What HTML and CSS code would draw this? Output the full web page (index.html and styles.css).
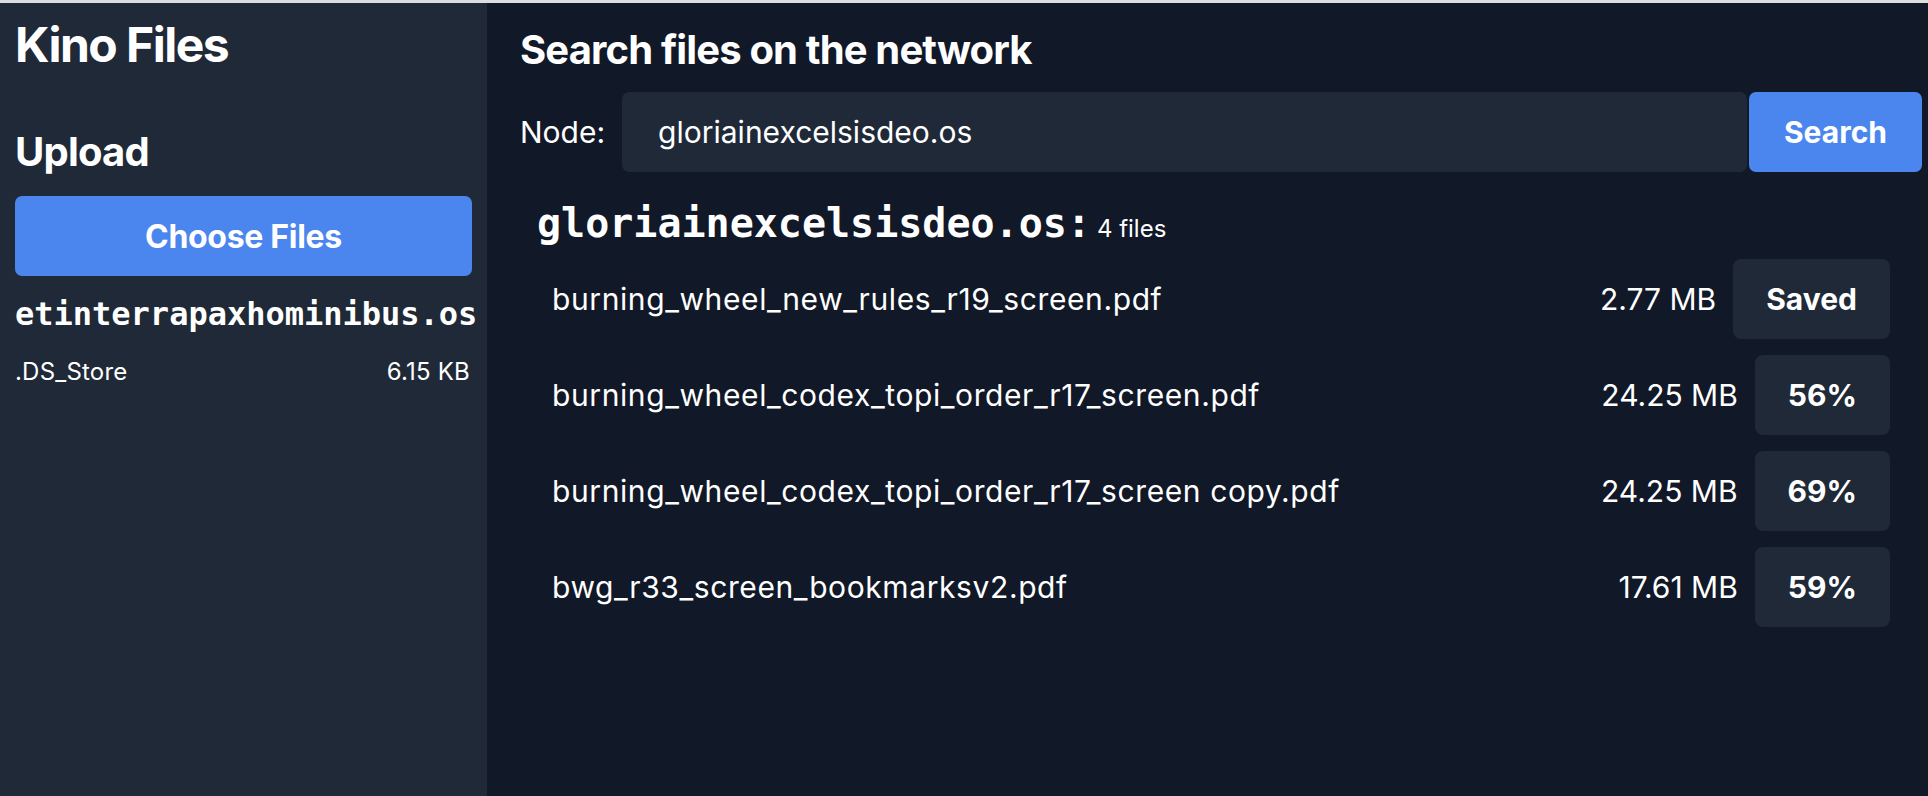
FILE: index.html
```html
<!DOCTYPE html>
<html lang="en">
<head>
<meta charset="utf-8">
<title>Kino Files</title>
<link rel="stylesheet" href="styles.css">
</head>
<body>
<div class="topstrip"></div>
<div class="app">
  <aside class="sidebar">
    <h1 class="title">Kino Files</h1>
    <h2 class="upload-title">Upload</h2>
    <button class="choose-btn">Choose Files</button>
    <div class="node-name">etinterrapaxhominibus.os</div>
    <div class="local-file">
      <span>.DS_Store</span>
      <span>6.15 KB</span>
    </div>
  </aside>
  <main class="main">
    <h2 class="search-title">Search files on the network</h2>
    <div class="search-row">
      <label class="node-label" for="node">Node:</label>
      <input id="node" class="node-input" type="text" value="gloriainexcelsisdeo.os">
      <button class="search-btn">Search</button>
    </div>
    <section class="results">
      <h3 class="results-title">gloriainexcelsisdeo.os:<span class="results-count">4 files</span></h3>
      <ul class="file-list">
        <li class="file-row">
          <span class="file-name">burning_wheel_new_rules_r19_screen.pdf</span>
          <span class="file-size">2.77 MB</span>
          <span class="file-status">Saved</span>
        </li>
        <li class="file-row">
          <span class="file-name">burning_wheel_codex_topi_order_r17_screen.pdf</span>
          <span class="file-size">24.25 MB</span>
          <span class="file-status">56%</span>
        </li>
        <li class="file-row">
          <span class="file-name">burning_wheel_codex_topi_order_r17_screen copy.pdf</span>
          <span class="file-size">24.25 MB</span>
          <span class="file-status">69%</span>
        </li>
        <li class="file-row">
          <span class="file-name">bwg_r33_screen_bookmarksv2.pdf</span>
          <span class="file-size">17.61 MB</span>
          <span class="file-status">59%</span>
        </li>
      </ul>
    </section>
  </main>
</div>
</body>
</html>
```
FILE: styles.css
```css
* { box-sizing: border-box; }
html, body { margin: 0; padding: 0; height: 100%; }
body {
  font-family: Inter, "Noto Sans", sans-serif;
  color: #ffffff;
  background: #111827;
  display: flex;
  flex-direction: column;
  overflow: hidden;
}
.topstrip { height: 3px; background: #dcdddf; flex: none; }
.app { flex: 1; display: flex; min-height: 0; }

.sidebar {
  width: 487px;
  flex: none;
  background: #1f2937;
  padding: 14px 15px 0 15px;
  display: flex;
  flex-direction: column;
}
.title {
  margin: 0;
  font-size: 48px;
  line-height: 56px;
  font-weight: 700;
  letter-spacing: -1.5px;
}
.upload-title {
  margin: 55px 0 0 0;
  font-size: 40px;
  line-height: 48px;
  font-weight: 700;
  letter-spacing: -0.8px;
}
.choose-btn {
  margin-top: 20px;
  height: 80px;
  width: 100%;
  border: none;
  border-radius: 7px;
  background: #4b86ee;
  color: #fff;
  font-family: inherit;
  font-size: 32px;
  font-weight: 700;
  letter-spacing: -0.3px;
}
.node-name {
  margin-top: 18px;
  font-family: "DejaVu Sans Mono", monospace;
  font-weight: 700;
  font-size: 32px;
  line-height: 40px;
}
.local-file {
  margin-top: 24px;
  display: flex;
  justify-content: space-between;
  font-size: 24px;
  line-height: 28px;
  padding-right: 2px;
  letter-spacing: 0.2px;
}

.main {
  flex: 1;
  min-width: 0;
  padding: 23px 6px 0 33px;
  display: flex;
  flex-direction: column;
}
.search-title {
  margin: 0;
  font-size: 40px;
  line-height: 48px;
  font-weight: 700;
  letter-spacing: -0.85px;
}
.search-row {
  margin-top: 18px;
  display: flex;
  align-items: center;
  height: 80px;
}
.node-label { font-size: 30px; margin-right: 17px; }
.node-input {
  flex: 1;
  min-width: 0;
  height: 80px;
  border: none;
  border-radius: 7px;
  background: #1f2937;
  color: #fff;
  font-family: inherit;
  font-size: 30px;
  padding: 0 0 0 36px;
  outline: none;
}
.search-btn {
  margin-left: 2px;
  width: 173px;
  height: 80px;
  border: none;
  border-radius: 7px;
  background: #4b86ee;
  color: #fff;
  font-family: inherit;
  font-size: 30px;
  font-weight: 700;
}
.results { padding: 0 32px 0 17px; }
.results-title {
  margin: 27px 0 0 0;
  font-family: "DejaVu Sans Mono", monospace;
  font-size: 40px;
  font-weight: 700;
  line-height: 48px;
}
.results-count {
  font-family: Inter, "Noto Sans", sans-serif;
  font-size: 24px;
  font-weight: 400;
  margin-left: 6px;
}
.file-list {
  list-style: none;
  margin: 6px 0 0 0;
  padding: 0 0 0 15px;
  display: flex;
  flex-direction: column;
  gap: 16px;
}
.file-row {
  display: flex;
  align-items: center;
  font-size: 30px;
}
.file-name { flex: 1; min-width: 0; letter-spacing: 0.6px; }
.file-size { margin-right: 17px; }
.file-status {
  height: 80px;
  padding: 0 33px;
  display: flex;
  align-items: center;
  border-radius: 8px;
  background: #1f2937;
  font-weight: 700;
}
```
